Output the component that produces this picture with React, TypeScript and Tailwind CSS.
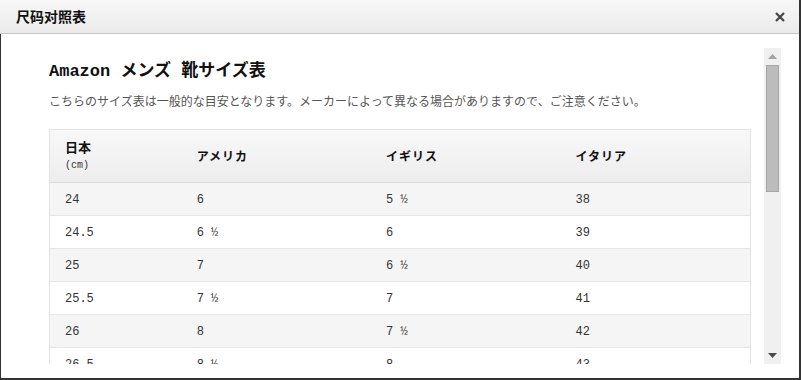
const rows: [string, string, string, string][] = [
  ["24", "6", "5 ½", "38"],
  ["24.5", "6 ½", "6", "39"],
  ["25", "7", "6 ½", "40"],
  ["25.5", "7 ½", "7", "41"],
  ["26", "8", "7 ½", "42"],
  ["26.5", "8 ½", "8", "43"],
  ["27", "9", "8 ½", "44"],
  ["27.5", "9 ½", "9", "45"],
];

const mono = "font-['Liberation_Mono','Noto_Sans_CJK_JP',monospace]";
const jp = "font-['Noto_Sans_CJK_JP','Noto_Sans_CJK_SC',sans-serif]";

function Scrollbar() {
  return (
    <div className="w-[17px] h-[316px] bg-[#f0f0f0] flex flex-col items-center">
      <div className="h-[17px] w-full flex items-center justify-center">
        <svg width="9" height="5" viewBox="0 0 9 5">
          <path d="M0 5 L4.5 0 L9 5 Z" fill="#a3a3a3" />
        </svg>
      </div>
      <div className="w-[13px] h-[127px] bg-[#bcbcbc] border border-[#a6a6a6]" />
      <div className="flex-1" />
      <div className="h-[17px] w-full flex items-center justify-center">
        <svg width="9" height="5" viewBox="0 0 9 5">
          <path d="M0 0 L9 0 L4.5 5 Z" fill="#4a4a4a" />
        </svg>
      </div>
    </div>
  );
}

export default function App() {
  return (
    <div className="w-[801px] h-[380px] bg-white flex flex-col border-r-2 border-b-2 border-[#333]">
      <div className="h-[34px] shrink-0 flex items-center justify-between pl-[16px] pr-[14px] bg-gradient-to-b from-[#f7f7f7] to-[#ebebeb] border-b border-[#c6c6c6]">
        <span className="text-[14px] font-bold text-[#111] font-['Noto_Sans_CJK_SC',sans-serif]">
          尺码对照表
        </span>
        <svg width="10" height="10" viewBox="0 0 10 10">
          <path d="M1 1 L9 9 M9 1 L1 9" stroke="#444" strokeWidth="2.2" />
        </svg>
      </div>
      <div className="flex-1 flex border-l border-[#333] pt-[14px] pl-[48px] pr-[18px]">
        <div className="flex-1 h-[316px] overflow-hidden">
          <h1 className={`mt-[12px] h-[24px] leading-[24px] text-[17px] font-bold text-[#111] ${mono}`}>
            Amazon メンズ 靴サイズ表
          </h1>
          <p className={`mt-[8px] leading-[18px] text-[12px] text-[#555] ${jp}`}>
            こちらのサイズ表は一般的な目安となります。メーカーによって異なる場合がありますので、ご注意ください。
          </p>
          <div className="mt-[19px] w-[702px] border border-[#e3e3e3]">
            <div className="flex h-[53px] bg-gradient-to-b from-[#f8f8f8] to-[#ededed] border-b border-[#dcdcdc] text-[#111]">
              <div className="w-[132px] pl-[15px] flex flex-col justify-center">
                <span className={`text-[13px] font-bold leading-[18px] ${jp}`}>日本</span>
                <span className={`mt-[2px] text-[10px] leading-[16px] text-[#333] ${mono}`}>(cm)</span>
              </div>
              <div className={`w-[190px] pl-[15px] flex items-center text-[12px] font-bold tracking-[1px] ${jp}`}>アメリカ</div>
              <div className={`w-[190px] pl-[15px] flex items-center text-[12px] font-bold tracking-[1px] ${jp}`}>イギリス</div>
              <div className={`w-[190px] pl-[15px] flex items-center text-[12px] font-bold tracking-[1px] ${jp}`}>イタリア</div>
            </div>
            {rows.map((r, i) => (
              <div
                key={r[0]}
                className={`flex h-[33px] pt-[2px] border-b border-[#e6e6e6] text-[12px] text-[#333] ${mono} ${i % 2 === 0 ? "bg-[#f5f5f5]" : "bg-white"}`}
              >
                <div className="w-[132px] pl-[15px] flex items-center">{r[0]}</div>
                <div className="w-[190px] pl-[15px] flex items-center">{r[1]}</div>
                <div className="w-[190px] pl-[15px] flex items-center">{r[2]}</div>
                <div className="w-[190px] pl-[15px] flex items-center">{r[3]}</div>
              </div>
            ))}
          </div>
        </div>
        <Scrollbar />
      </div>
    </div>
  );
}
